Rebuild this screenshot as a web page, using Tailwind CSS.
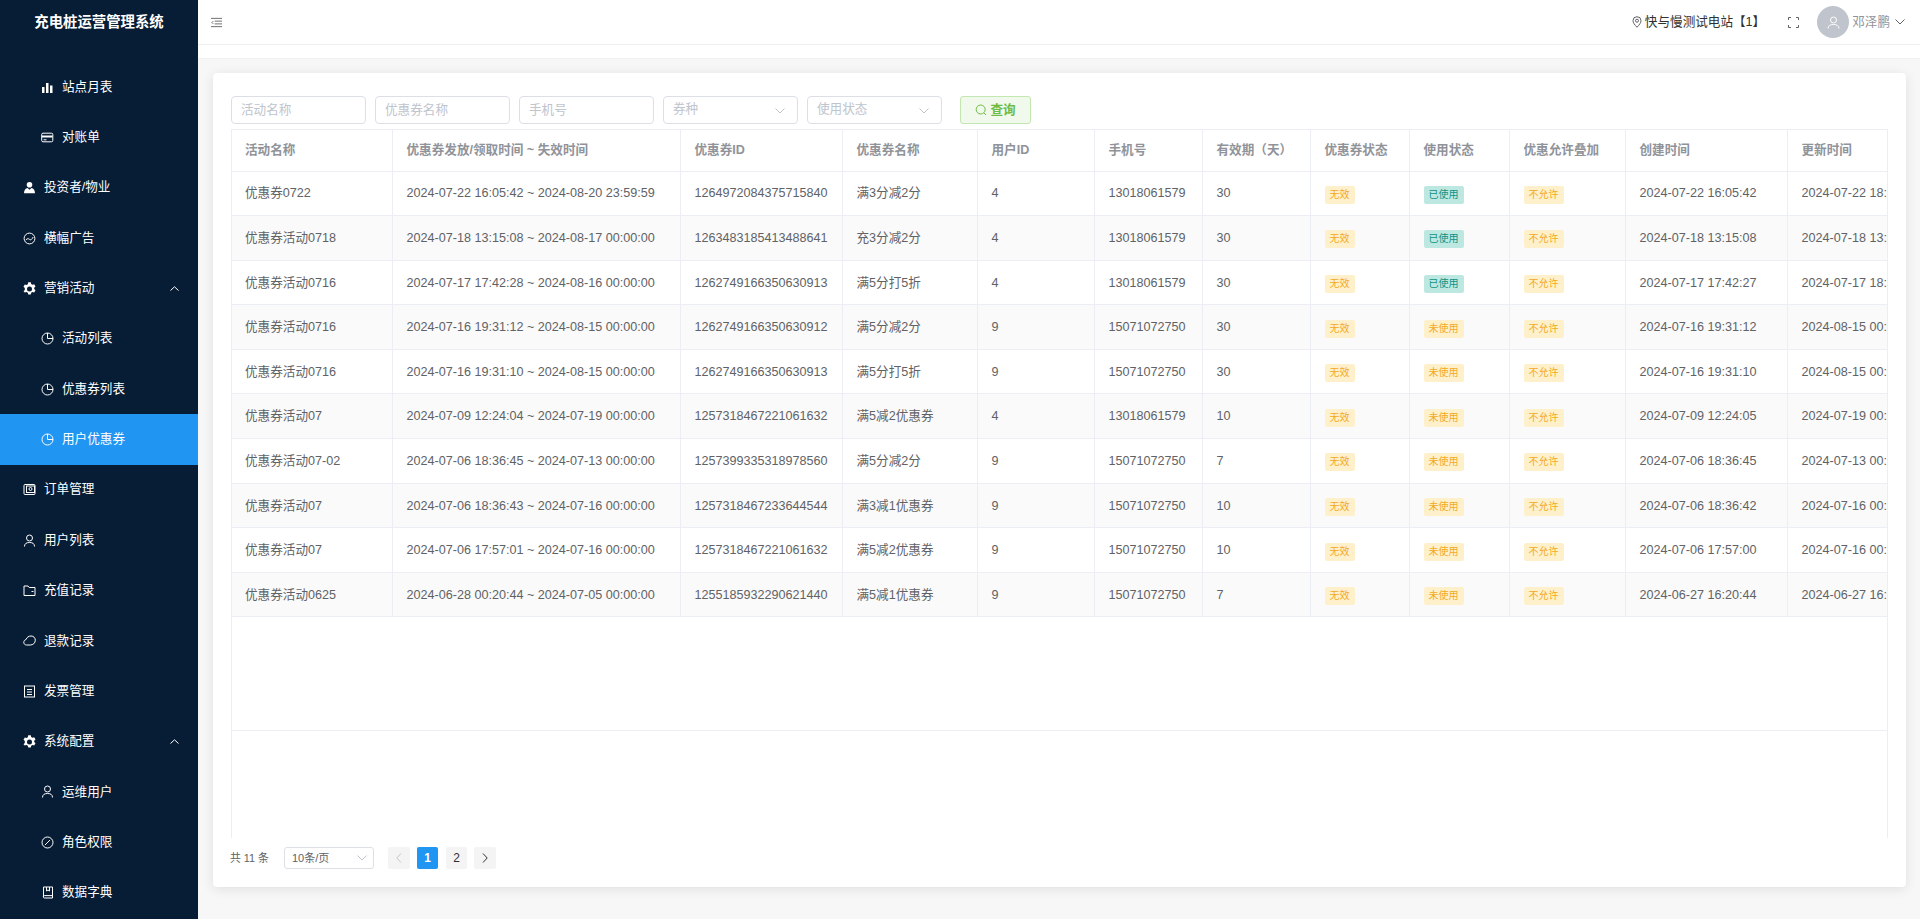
<!DOCTYPE html>
<html lang="zh-CN">
<head>
  <meta charset="UTF-8" />
  <title>充电桩运营管理系统</title>
  <script src="https://cdn.jsdelivr.net/npm/@tailwindcss/browser@4"></script>
</head>
<body class="h-screen overflow-hidden flex bg-[#f7f7f7] text-[#606266] text-[12.6px] font-['Liberation_Sans','Noto_Sans_CJK_SC',sans-serif]">

  <!-- sidebar -->
  <aside class="w-[198px] h-full shrink-0 overflow-hidden bg-[#071c35] text-white">
    <div class="h-[46px] flex items-center justify-center text-[14.4px] font-bold">充电桩运营管理系统</div>
    <nav id="menu" class="pt-[16px]"></nav>
  </aside>

  <div class="flex-1 min-w-0 flex flex-col">
    <!-- top bar -->
    <header class="h-[45px] shrink-0 bg-white border-b border-[#eeeeee] flex items-center pl-[13px] pr-[15px]">
      <svg class="w-[11px] h-[11px] text-[#606266]" viewBox="0 0 12 12" fill="none" stroke="currentColor" stroke-width="1"><path d="M0 1.500h12M4 4.500h8M4 7.500h8M0 10.500h12"/><path d="M2.500 4.500L1 6l1.500 1.500"/></svg>
      <div class="ml-auto flex items-center">
        <svg class="w-[10px] h-[12px] text-[#606266] mr-[3px]" viewBox="0 0 10 12" fill="none" stroke="currentColor"><path d="M5 11.300C2.500 8.600 1 6.700 1 4.700a4 4 0 0 1 8 0c0 2-1.500 3.900-4 6.600z"/><circle cx="5" cy="4.700" r="1.500"/></svg>
        <span class="text-[#303133]">快与慢测试电站【1】</span>
        <svg class="w-[11px] h-[11px] ml-[23px] text-[#606266]" viewBox="0 0 11 11" fill="none" stroke="currentColor"><path d="M.5 3V.5H3M8 .5h2.500V3M10.500 8v2.500H8M3 10.500H.5V8"/></svg>
        <div class="w-[32px] h-[32px] ml-[18px] rounded-full bg-[#c0c4cc] flex items-center justify-center">
          <svg class="w-[13px] h-[13px]" viewBox="0 0 13 13" fill="none" stroke="#ffffff"><circle cx="6.500" cy="4" r="3"/><path d="M1 12.500c0-3 2.500-4 5.500-4s5.500 1 5.500 4"/></svg>
        </div>
        <span class="ml-[3px] text-[#909399]">邓泽鹏</span>
        <svg class="w-[10px] h-[6px] ml-[5px] text-[#606266]" viewBox="0 0 10 6" fill="none" stroke="currentColor"><path d="M.5.5L5 5l4.500-4.500"/></svg>
      </div>
    </header>
    <div class="h-[14px] shrink-0 bg-white border-b border-[#f0f0f0]"></div>

    <!-- main -->
    <main class="flex-1 min-h-0 pt-[14px] pl-[15px] pr-[14px] pb-[32px]">
      <div class="h-full bg-white rounded-[4px] shadow-[0_2px_12px_0_rgba(0,0,0,0.1)] pt-[23px] pl-[18px] pr-[18px] flex flex-col">

        <div class="h-[28px] shrink-0 flex items-center gap-[9.500px]">
          <input placeholder="活动名称" class="w-[134.500px] h-[28px] px-[9px] border border-[#dcdfe6] rounded-[4px] outline-none placeholder:text-[#c0c4cc]" />
          <input placeholder="优惠券名称" class="w-[134.500px] h-[28px] px-[9px] border border-[#dcdfe6] rounded-[4px] outline-none placeholder:text-[#c0c4cc]" />
          <input placeholder="手机号" class="w-[134.500px] h-[28px] px-[9px] border border-[#dcdfe6] rounded-[4px] outline-none placeholder:text-[#c0c4cc]" />
          <div class="w-[134.500px] h-[28px] pl-[9px] pr-[12px] pb-[2px] border border-[#dcdfe6] rounded-[4px] flex items-center justify-between text-[#c0c4cc]">
            <span>券种</span>
            <svg class="w-[10px] h-[6px] mt-[3px]" viewBox="0 0 10 6" fill="none" stroke="currentColor"><path d="M.5.5L5 5l4.500-4.500"/></svg>
          </div>
          <div class="w-[134.500px] h-[28px] pl-[9px] pr-[12px] pb-[2px] border border-[#dcdfe6] rounded-[4px] flex items-center justify-between text-[#c0c4cc]">
            <span>使用状态</span>
            <svg class="w-[10px] h-[6px] mt-[3px]" viewBox="0 0 10 6" fill="none" stroke="currentColor"><path d="M.5.5L5 5l4.500-4.500"/></svg>
          </div>
          <button class="ml-[9px] w-[71px] h-[28px] border border-[#c2e7b0] rounded-[3px] bg-[#f0f9eb] text-[#6cbc45] font-semibold flex items-center justify-center gap-[3px]">
            <svg class="w-[12px] h-[12px]" viewBox="0 0 12 12" fill="none" stroke="currentColor"><circle cx="5.700" cy="5.500" r="4.500"/><path d="M9 9l2 2"/></svg>
            <span>查询</span>
          </button>
        </div>

        <div class="mt-[5px] h-[709px] shrink-0 border-l border-r border-t border-[#ebeef5] overflow-hidden">
          <table class="table-fixed w-[1700px] border-collapse">
            <colgroup>
              <col class="w-[160px]" /><col class="w-[288px]" /><col class="w-[162px]" /><col class="w-[135px]" />
              <col class="w-[117px]" /><col class="w-[108px]" /><col class="w-[108px]" /><col class="w-[99px]" />
              <col class="w-[100px]" /><col class="w-[116px]" /><col class="w-[162px]" /><col class="w-[145px]" />
            </colgroup>
            <thead>
              <tr id="head" class="h-[41px] text-[#909399] font-semibold"></tr>
            </thead>
            <tbody id="rows"></tbody>
          </table>
          <div class="h-[114px] border-b border-[#ebeef5]"></div>
        </div>

        <div class="mt-[9px] flex items-center h-[22px] text-[10.8px]">
          <span class="w-[54px] -ml-[1px]">共 11 条</span>
          <div class="w-[90px] h-[22px] pl-[7px] pr-[6px] border border-[#dcdfe6] rounded-[3px] flex items-center justify-between text-[11px]">
            <span>10条/页</span>
            <svg class="w-[10px] h-[6px] text-[#c0c4cc]" viewBox="0 0 10 6" fill="none" stroke="currentColor"><path d="M.5.5L5 5l4.500-4.500"/></svg>
          </div>
          <div class="ml-[14px] w-[22px] h-[22px] rounded-[2px] bg-[#f4f4f5] flex items-center justify-center text-[#c0c4cc]">
            <svg class="w-[6px] h-[10px]" viewBox="0 0 6 10" fill="none" stroke="currentColor"><path d="M5 .5L.8 5 5 9.500"/></svg>
          </div>
          <div class="ml-[7px] w-[21px] h-[22px] rounded-[2px] bg-[#2095f2] text-white text-[12px] font-bold flex items-center justify-center">1</div>
          <div class="ml-[8px] w-[21px] h-[22px] rounded-[2px] bg-[#f4f4f5] text-[#303133] text-[12px] flex items-center justify-center">2</div>
          <div class="ml-[7px] w-[22px] h-[22px] rounded-[2px] bg-[#f4f4f5] flex items-center justify-center text-[#303133]">
            <svg class="w-[6px] h-[10px]" viewBox="0 0 6 10" fill="none" stroke="currentColor"><path d="M1 .5L5.200 5 1 9.500"/></svg>
          </div>
        </div>
      </div>
    </main>
  </div>

  <script>
    const icons = {
      bars: '<path fill="currentColor" d="M1 6h2.500v6H1zM5 2h2.500v10H5zM9 4.500h2.500V12H9z"/>',
      card: '<rect x=".7" y="2.200" width="11.100" height="8.600" rx="1.300" fill="none" stroke="currentColor"/><path fill="currentColor" d="M1 4.500h10.500V6.500H1z"/><path stroke="currentColor" d="M2.500 8.800h3"/>',
      person: '<circle cx="6.500" cy="3.800" r="2.800" fill="currentColor"/><path fill="currentColor" d="M1 12.300c0-3.300 1.600-4.800 3.500-5.300l2 1.700 2-1.700c1.900.5 3.500 2 3.500 5.300z"/>',
      gauge: '<circle cx="6.500" cy="6.500" r="5.400" fill="none" stroke="currentColor"/><path fill="none" stroke="currentColor" d="M2.800 8.200c1.500-2 2.500-1.800 3.700-.8s2.200.2 3.700-2.400"/>',
      gear: '<path fill="currentColor" fill-rule="evenodd" d="M5.200.8h2.600l.4 1.700 1.300.7 1.700-.5 1.300 2.300-1.300 1.200v1.400l1.300 1.200-1.300 2.300-1.700-.5-1.300.7-.4 1.700H5.200l-.4-1.700-1.300-.7-1.700.5L.5 9.800l1.300-1.200V6.400L.5 5.200l1.300-2.300 1.700.5 1.300-.7zM6.500 5a2.200 2.200 0 1 0 0 5 2.200 2.200 0 0 0 0-5z" transform="translate(0 -.5)"/>',
      clock: '<circle cx="6.500" cy="6.500" r="5.500" fill="none" stroke="currentColor"/><path fill="none" stroke="currentColor" d="M6.500 1v5.500H12"/>',
      album: '<rect x="1" y="1.500" width="11" height="10" rx="1" fill="none" stroke="currentColor"/><rect x="3.500" y="3" width="8" height="6.500" fill="none" stroke="currentColor"/><circle cx="7.500" cy="6" r="1.500" fill="none" stroke="currentColor"/>',
      user: '<circle cx="6.500" cy="4" r="3" fill="none" stroke="currentColor"/><path fill="none" stroke="currentColor" d="M1.500 12.500c0-3 2-4 5-4s5 1 5 4"/>',
      folder: '<path fill="none" stroke="currentColor" d="M1 2h4l1.200 1.500H12V11.500H1z"/><path stroke="currentColor" d="M8.500 7.500h2"/>',
      cloud: '<path fill="none" stroke="currentColor" d="M3.500 11C1.800 11 .8 9.800.8 8.300c0-1.500 1-2.500 2.200-2.700C3.800 3.200 5.800 2 8 2c2.600 0 4.300 1.800 4.300 4.200 0 2.800-2.200 4.800-5 4.800z"/>',
      doc: '<rect x="1.500" y="1" width="10" height="11" fill="none" stroke="currentColor"/><path stroke="currentColor" d="M4 4.500h5M4 7h5M4 9.500h5"/>',
      compass: '<circle cx="6.500" cy="6.500" r="5.500" fill="none" stroke="currentColor"/><path fill="none" stroke="currentColor" d="M9 4L4 9"/>',
      book: '<path fill="none" stroke="currentColor" d="M2.500 11V1h9v11H3.500a1.200 1.200 0 0 1 0-2.400h8"/><path fill="none" stroke="currentColor" d="M5.500 1v4l1.500-1 1.500 1V1"/>'
    };
    const chevron = '<svg class="absolute left-[170px] w-[9px] h-[5px]" viewBox="0 0 9 5" fill="none" stroke="currentColor"><path d="M.5 4.500L4.500.8l4 3.700"/></svg>';

    const menu = [
      ["站点月表", "bars", 1], ["对账单", "card", 1], ["投资者/物业", "person", 0], ["横幅广告", "gauge", 0],
      ["营销活动", "gear", 0, true], ["活动列表", "clock", 1], ["优惠券列表", "clock", 1], ["用户优惠券", "clock", 1, false, true],
      ["订单管理", "album", 0], ["用户列表", "user", 0], ["充值记录", "folder", 0], ["退款记录", "cloud", 0],
      ["发票管理", "doc", 0], ["系统配置", "gear", 0, true], ["运维用户", "user", 1], ["角色权限", "compass", 1], ["数据字典", "book", 1]
    ];
    document.getElementById("menu").innerHTML = menu.map(([name, icon, sub, arrow, active]) => `
      <div class="relative h-[50.35px] flex items-center ${sub ? "pl-[41px]" : "pl-[23px]"} ${active ? "bg-[#2095f2]" : ""}">
        <svg class="w-[13px] h-[13px] mr-[8px] shrink-0" viewBox="0 0 13 13">${icons[icon]}</svg>
        <span>${name}</span>
        ${arrow ? chevron : ""}
      </div>`).join("");

    const heads = ["活动名称", "优惠券发放/领取时间 ~ 失效时间", "优惠券ID", "优惠券名称", "用户ID", "手机号", "有效期（天）", "优惠券状态", "使用状态", "优惠允许叠加", "创建时间", "更新时间"];
    document.getElementById("head").innerHTML = heads.map(h =>
      `<th class="pl-[14px] pr-[13px] first:pl-[13px] text-left font-semibold whitespace-nowrap border-r border-b border-[#ebeef5] last:border-r-0">${h}</th>`).join("");

    const A = "13018061579", B = "15071072750";
    const data = [
      ["优惠券0722", "2024-07-22 16:05:42 ~ 2024-08-20 23:59:59", "1264972084375715840", "满3分减2分", 4, A, 30, "已使用", "2024-07-22 16:05:42", "2024-07-22 18:30:00"],
      ["优惠券活动0718", "2024-07-18 13:15:08 ~ 2024-08-17 00:00:00", "1263483185413488641", "充3分减2分", 4, A, 30, "已使用", "2024-07-18 13:15:08", "2024-07-18 13:30:00"],
      ["优惠券活动0716", "2024-07-17 17:42:28 ~ 2024-08-16 00:00:00", "1262749166350630913", "满5分打5折", 4, A, 30, "已使用", "2024-07-17 17:42:27", "2024-07-17 18:30:00"],
      ["优惠券活动0716", "2024-07-16 19:31:12 ~ 2024-08-15 00:00:00", "1262749166350630912", "满5分减2分", 9, B, 30, "未使用", "2024-07-16 19:31:12", "2024-08-15 00:00:00"],
      ["优惠券活动0716", "2024-07-16 19:31:10 ~ 2024-08-15 00:00:00", "1262749166350630913", "满5分打5折", 9, B, 30, "未使用", "2024-07-16 19:31:10", "2024-08-15 00:00:00"],
      ["优惠券活动07", "2024-07-09 12:24:04 ~ 2024-07-19 00:00:00", "1257318467221061632", "满5减2优惠券", 4, A, 10, "未使用", "2024-07-09 12:24:05", "2024-07-19 00:00:00"],
      ["优惠券活动07-02", "2024-07-06 18:36:45 ~ 2024-07-13 00:00:00", "1257399335318978560", "满5分减2分", 9, B, 7, "未使用", "2024-07-06 18:36:45", "2024-07-13 00:00:00"],
      ["优惠券活动07", "2024-07-06 18:36:43 ~ 2024-07-16 00:00:00", "1257318467233644544", "满3减1优惠券", 9, B, 10, "未使用", "2024-07-06 18:36:42", "2024-07-16 00:00:00"],
      ["优惠券活动07", "2024-07-06 17:57:01 ~ 2024-07-16 00:00:00", "1257318467221061632", "满5减2优惠券", 9, B, 10, "未使用", "2024-07-06 17:57:00", "2024-07-16 00:00:00"],
      ["优惠券活动0625", "2024-06-28 00:20:44 ~ 2024-07-05 00:00:00", "1255185932290621440", "满5减1优惠券", 9, B, 7, "未使用", "2024-06-27 16:20:44", "2024-06-27 16:30:00"]
    ];

    const td = "pt-[1px] pl-[14px] pr-[13px] first:pl-[13px] whitespace-nowrap overflow-hidden border-r border-b border-[#ebeef5] last:border-r-0";
    const warn = "inline-block h-[18px] leading-[18px] px-[5px] mt-[2px] rounded-[2px] text-[10px] bg-[#fff0cc] text-[#f3a91f] align-middle";
    const teal = "inline-block h-[18px] leading-[18px] px-[5px] mt-[2px] rounded-[2px] text-[10px] bg-[#bde8e2] text-[#0f9284] align-middle";

    document.getElementById("rows").innerHTML = data.map((r, i) => `
      <tr class="h-[44.6px] ${i % 2 ? "bg-[#fafafa]" : ""}">
        <td class="${td}">${r[0]}</td><td class="${td}">${r[1]}</td><td class="${td}">${r[2]}</td><td class="${td}">${r[3]}</td>
        <td class="${td}">${r[4]}</td><td class="${td}">${r[5]}</td><td class="${td}">${r[6]}</td>
        <td class="${td}"><span class="${warn}">无效</span></td>
        <td class="${td}"><span class="${r[7] === "已使用" ? teal : warn}">${r[7]}</span></td>
        <td class="${td}"><span class="${warn}">不允许</span></td>
        <td class="${td}">${r[8]}</td><td class="${td}">${r[9]}</td>
      </tr>`).join("");
  </script>
</body>
</html>
